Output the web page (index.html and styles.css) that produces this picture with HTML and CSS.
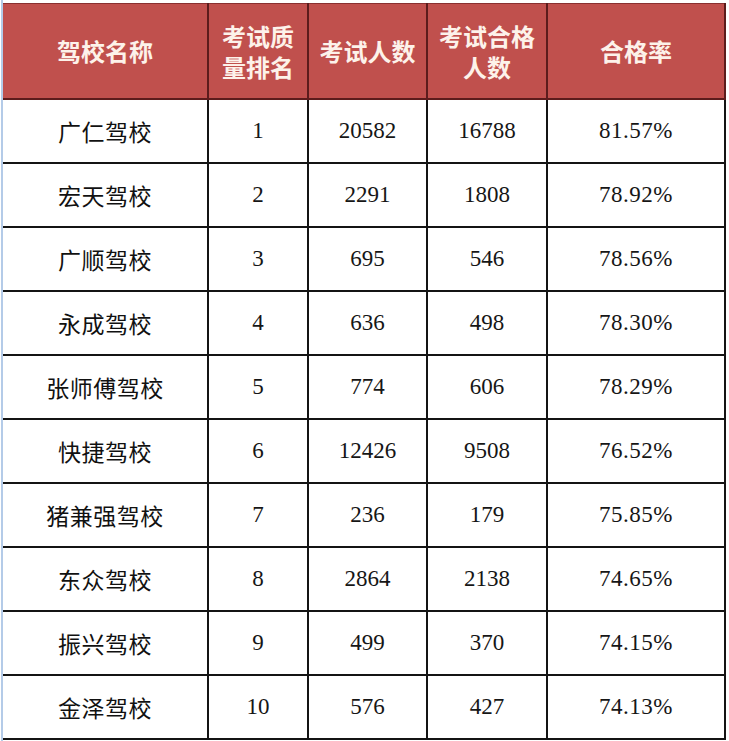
FILE: index.html
```html
<!DOCTYPE html>
<html lang="zh-CN">
<head>
<meta charset="utf-8">
<title>驾校考试合格率</title>
<link rel="stylesheet" href="styles.css">
</head>
<body>
<div class="sheet">
  <table class="grid">
    <colgroup>
      <col class="c1"><col class="c2"><col class="c3"><col class="c4"><col class="c5">
    </colgroup>
    <thead>
      <tr>
        <th>驾校名称</th>
        <th><span class="ln">考试质</span><span class="ln">量排名</span></th>
        <th>考试人数</th>
        <th><span class="ln">考试合格</span><span class="ln">人数</span></th>
        <th>合格率</th>
      </tr>
    </thead>
    <tbody>
      <tr><td class="name">广仁驾校</td><td>1</td><td>20582</td><td>16788</td><td class="pct">81.57%</td></tr>
      <tr><td class="name">宏天驾校</td><td>2</td><td>2291</td><td>1808</td><td class="pct">78.92%</td></tr>
      <tr><td class="name">广顺驾校</td><td>3</td><td>695</td><td>546</td><td class="pct">78.56%</td></tr>
      <tr><td class="name">永成驾校</td><td>4</td><td>636</td><td>498</td><td class="pct">78.30%</td></tr>
      <tr><td class="name">张师傅驾校</td><td>5</td><td>774</td><td>606</td><td class="pct">78.29%</td></tr>
      <tr><td class="name">快捷驾校</td><td>6</td><td>12426</td><td>9508</td><td class="pct">76.52%</td></tr>
      <tr><td class="name">猪兼强驾校</td><td>7</td><td>236</td><td>179</td><td class="pct">75.85%</td></tr>
      <tr><td class="name">东众驾校</td><td>8</td><td>2864</td><td>2138</td><td class="pct">74.65%</td></tr>
      <tr><td class="name">振兴驾校</td><td>9</td><td>499</td><td>370</td><td class="pct">74.15%</td></tr>
      <tr><td class="name">金泽驾校</td><td>10</td><td>576</td><td>427</td><td class="pct">74.13%</td></tr>
    </tbody>
  </table>
</div>
</body>
</html>
```

FILE: styles.css
```css
html, body {
  margin: 0;
  padding: 0;
  background: #ffffff;
}

.sheet {
  margin-left: 1px;
  border-left: 2px solid #b4cbe8;
  padding-top: 3px;
  height: 738px;
  overflow: hidden;
}

.grid {
  border-collapse: collapse;
  table-layout: fixed;
  width: 722px;
}

.c1 { width: 205px; }
.c2 { width: 100px; }
.c3 { width: 119px; }
.c4 { width: 120px; }
.c5 { width: 178px; }

.grid th {
  height: 95px;
  padding: 0;
  background: #c0504d;
  color: #fdf2ea;
  font-family: "Noto Sans CJK SC", "Noto Sans", sans-serif;
  font-weight: 700;
  font-size: 24px;
  line-height: 31px;
  text-align: center;
  vertical-align: middle;
  border: 2px solid #5c1c1c;
  border-top: 1px solid #8a3030;
  box-sizing: border-box;
}

.grid th .ln {
  display: block;
  height: 31px;
  line-height: 31px;
  overflow: visible;
}

.grid th:first-child {
  border-left: none;
}

.grid td {
  height: 64px;
  padding: 0;
  text-align: center;
  vertical-align: middle;
  color: #161616;
  font-family: "Liberation Serif", "Times New Roman", serif;
  font-size: 23px;
  border: 2px solid #141414;
  box-sizing: border-box;
}

.grid td:first-child {
  border-left: none;
}

.grid td.name {
  font-family: "Noto Sans CJK SC", "Noto Sans", sans-serif;
  font-size: 23px;
  font-weight: 400;
  letter-spacing: 0.5px;
  color: #111111;
}

.grid td.pct {
  letter-spacing: 0.5px;
}
```
